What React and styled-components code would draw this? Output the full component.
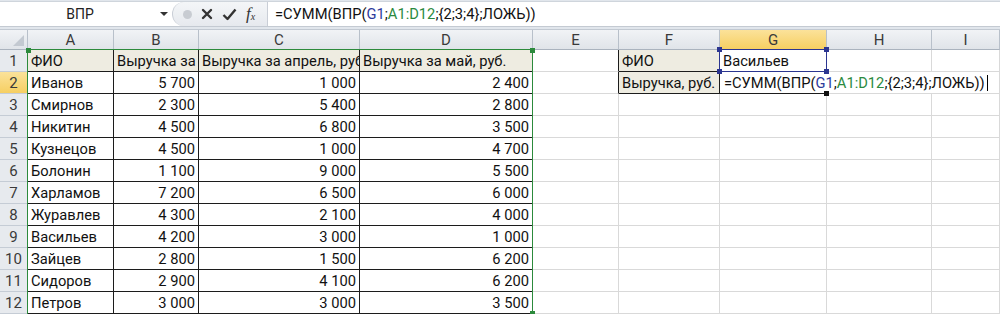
import React from 'react'
import styled, { createGlobalStyle } from 'styled-components'

const Global = createGlobalStyle`
  html, body { margin: 0; padding: 0; background: #fff; }
  body { font-family: Roboto, "Liberation Sans", sans-serif; overflow: hidden; }
`

const cols = [28, 86, 85, 161, 173, 86, 101, 107, 105, 68]
const colX = cols.reduce((acc, w) => [...acc, acc[acc.length - 1] + w], [0])
const HEAD_H = 20
const ROW_H = 22
const rowY = (r) => HEAD_H + (r - 1) * ROW_H

const data = [
  ['ФИО', 'Выручка за март, руб.', 'Выручка за апрель, руб.', 'Выручка за май, руб.'],
  ['Иванов', '5 700', '1 000', '2 400'],
  ['Смирнов', '2 300', '5 400', '2 800'],
  ['Никитин', '4 500', '6 800', '3 500'],
  ['Кузнецов', '4 500', '1 000', '4 700'],
  ['Болонин', '1 100', '9 000', '5 500'],
  ['Харламов', '7 200', '6 500', '6 000'],
  ['Журавлев', '4 300', '2 100', '4 000'],
  ['Васильев', '4 200', '3 000', '1 000'],
  ['Зайцев', '2 800', '1 500', '6 200'],
  ['Сидоров', '2 900', '4 100', '6 200'],
  ['Петров', '3 000', '3 000', '3 500'],
]

const letters = ['A', 'B', 'C', 'D', 'E', 'F', 'G', 'H', 'I']

const Window = styled.div`
  width: 1000px;
  height: 314px;
  display: flex;
  flex-direction: column;
  background: #fff;
  overflow: hidden;
`

const TopBar = styled.div`
  height: 30px;
  box-sizing: border-box;
  background: #e1e6ec;
  padding: 1px 0 4px 0;
  border-bottom: 1px solid #c2c9d2;
`

const BarRow = styled.div`
  height: 24px;
  display: flex;
  align-items: stretch;
  background: #fff;
  border-top: 1px solid #cfd5dc;
  border-bottom: 1px solid #c4cad2;
`

const NameBox = styled.div`
  width: 172px;
  display: flex;
  align-items: center;
  position: relative;
  font-size: 14px;
  color: #222;
  span { width: 160px; text-align: center; }
`

const DropArrow = styled.i`
  position: absolute;
  left: 160px;
  top: 10px;
  border-left: 4px solid transparent;
  border-right: 4px solid transparent;
  border-top: 4px solid #333;
`

const Buttons = styled.div`
  width: 96px;
  display: flex;
  align-items: center;
  gap: 9px;
  padding-left: 10px;
  box-sizing: border-box;
  background: linear-gradient(#f4f6f8, #e6e9ee);
  border-radius: 12px 0 0 12px;
  border-left: 1px solid #c9ced6;
  border-right: 1px solid #c9ced6;
`

const Dot = styled.i`
  width: 9px;
  height: 9px;
  border-radius: 50%;
  background: #c8ccd2;
`

const Fx = styled.span`
  font-family: "Liberation Serif", serif;
  font-style: italic;
  font-size: 17px;
  color: #333;
  sub { font-size: 10px; vertical-align: -1px; }
`

const FormulaInput = styled.div`
  flex: 1;
  display: flex;
  align-items: center;
  padding-left: 7px;
  font-size: 14.7px;
  color: #111;
  white-space: nowrap;
`

const Sheet = styled.div`
  position: relative;
  display: grid;
  grid-template-columns: ${cols.map((c) => c + 'px').join(' ')};
  grid-template-rows: ${HEAD_H}px repeat(12, ${ROW_H}px);
`

const ColHead = styled.div`
  box-sizing: border-box;
  display: flex;
  align-items: center;
  justify-content: center;
  font-size: 15px;
  color: #3a3a3a;
  border-right: 1px solid #b8c0ca;
  border-bottom: 1px solid #aab3be;
  background: ${({ $sel }) =>
    $sel ? 'linear-gradient(#fbe29a, #f6cf62)' : 'linear-gradient(#f1f3f6, #e0e4e9)'};
`

const Corner = styled(ColHead)`
  position: relative;
  &::after {
    content: '';
    position: absolute;
    right: 3px;
    bottom: 3px;
    border-left: 11px solid transparent;
    border-bottom: 11px solid #c3c9d1;
  }
`

const RowHead = styled.div`
  box-sizing: border-box;
  display: flex;
  align-items: center;
  justify-content: center;
  font-size: 15px;
  color: #3a3a3a;
  border-right: 1px solid #aab3be;
  border-bottom: 1px solid #c5ccd5;
  background: ${({ $sel }) => ($sel ? 'linear-gradient(#fbe29a, #f6cf62)' : '#e7eaee')};
`

const Cell = styled.div`
  box-sizing: border-box;
  display: flex;
  align-items: center;
  justify-content: ${({ $right }) => ($right ? 'flex-end' : 'flex-start')};
  padding: 1px 3px 0 3px;
  font-size: 14.7px;
  color: #111;
  white-space: nowrap;
  overflow: hidden;
  background: ${({ $tan }) => ($tan ? '#eeece1' : '#fff')};
  border-right: 1px solid ${({ $rb }) => ($rb ? '#1c1c1c' : '#d9d9d9')};
  border-bottom: 1px solid ${({ $bb }) => ($bb ? '#1c1c1c' : '#d9d9d9')};
`

const RangeBox = styled.div`
  position: absolute;
  box-sizing: border-box;
  pointer-events: none;
  border: 1px solid ${({ $color }) => $color};
  z-index: 2;
`

const Handle = styled.i`
  position: absolute;
  width: 5px;
  height: 5px;
  background: ${({ $color }) => $color};
  left: ${({ $x }) => $x}px;
  top: ${({ $y }) => $y}px;
  z-index: 3;
`

const EditBox = styled.div`
  position: absolute;
  box-sizing: border-box;
  height: ${ROW_H - 1}px;
  display: flex;
  align-items: center;
  padding: 1px 0 0 4px;
  font-size: 14.7px;
  color: #111;
  white-space: nowrap;
  background: #fff;
  z-index: 1;
`

const Ref = styled.span`
  color: ${({ $c }) => $c};
`

const Caret = styled.i`
  display: inline-block;
  width: 1px;
  height: 16px;
  margin-left: 2px;
  background: #000;
`

const Formula = () => (
  <>
    =СУММ(ВПР(<Ref $c="#2e3a9c">G1</Ref>;<Ref $c="#2b8a3e">A1:D12</Ref>;{'{2;3;4}'};ЛОЖЬ))
  </>
)

const Cross = () => (
  <svg width="12" height="12" viewBox="0 0 12 12">
    <path d="M2 2 L10 10 M10 2 L2 10" stroke="#333" strokeWidth="2.4" strokeLinecap="round" />
  </svg>
)

const Check = () => (
  <svg width="15" height="13" viewBox="0 0 15 13">
    <path d="M1.5 7 L5.5 11 L13.5 1.5" stroke="#333" strokeWidth="2.4" fill="none" strokeLinejoin="round" />
  </svg>
)

const cellFor = (r, c) => {
  // r: 1..12, c: 0..8 (A..I)
  if (c <= 3) {
    const v = data[r - 1][c]
    return { text: v, right: c > 0 && r > 1, tan: r === 1, rb: true, bb: true }
  }
  if (c === 4) return { text: '', rb: r <= 2 }
  if (c === 5 && r <= 2)
    return { text: r === 1 ? 'ФИО' : 'Выручка, руб.', tan: true, rb: true, bb: true }
  if (c === 6 && r === 1) return { text: 'Васильев', rb: true, bb: true }
  if (c === 6 && r === 2) return { text: '', rb: true, bb: true }
  return { text: '' }
}

export default function App() {
  const rows = []
  for (let r = 1; r <= 12; r++) {
    rows.push(
      <RowHead key={'rh' + r} $sel={r === 2}>
        {r}
      </RowHead>
    )
    for (let c = 0; c < 9; c++) {
      const cell = cellFor(r, c)
      rows.push(
        <Cell key={r + '-' + c} $right={cell.right} $tan={cell.tan} $rb={cell.rb} $bb={cell.bb}>
          {cell.text}
        </Cell>
      )
    }
  }

  const green = '#2c8a3c'
  const blue = '#2b3590'
  const gx1 = colX[1]
  const gx2 = colX[5]
  const gy1 = rowY(1)
  const gy2 = rowY(13)

  return (
    <Window>
      <Global />
      <TopBar>
        <BarRow>
          <NameBox>
            <span>ВПР</span>
            <DropArrow />
          </NameBox>
          <Buttons>
            <Dot />
            <Cross />
            <Check />
            <Fx>
              f<sub>x</sub>
            </Fx>
          </Buttons>
          <FormulaInput>
            <Formula />
          </FormulaInput>
        </BarRow>
      </TopBar>
      <Sheet>
        <Corner />
        {letters.map((l) => (
          <ColHead key={l} $sel={l === 'G'}>
            {l}
          </ColHead>
        ))}
        {rows}

        <RangeBox
          $color={green}
          style={{ left: gx1 - 1, top: gy1 - 1, width: gx2 - gx1 + 1, height: gy2 - gy1 + 2 }}
        />
        <Handle $color={green} $x={gx1 - 2} $y={gy1 - 2} />
        <Handle $color={green} $x={gx2 - 3} $y={gy1 - 2} />
        <Handle $color={green} $x={gx2 - 3} $y={gy2 - 3} />

        <RangeBox
          $color={blue}
          style={{ left: colX[7] - 1, top: rowY(1) - 1, width: colX[8] - colX[7] + 1, height: ROW_H + 1 }}
        />
        <Handle $color={blue} $x={colX[7] - 3} $y={rowY(1) - 3} />
        <Handle $color={blue} $x={colX[8] - 3} $y={rowY(1) - 3} />
        <Handle $color={blue} $x={colX[7] - 3} $y={rowY(2) - 3} />
        <Handle $color={blue} $x={colX[8] - 3} $y={rowY(2) - 3} />

        <EditBox style={{ left: colX[7], top: rowY(2), width: 272 }}>
          <Formula />
          <Caret />
        </EditBox>
        <Handle $color="#111" $x={colX[8] - 3} $y={rowY(3) - 3} />
      </Sheet>
    </Window>
  )
}
